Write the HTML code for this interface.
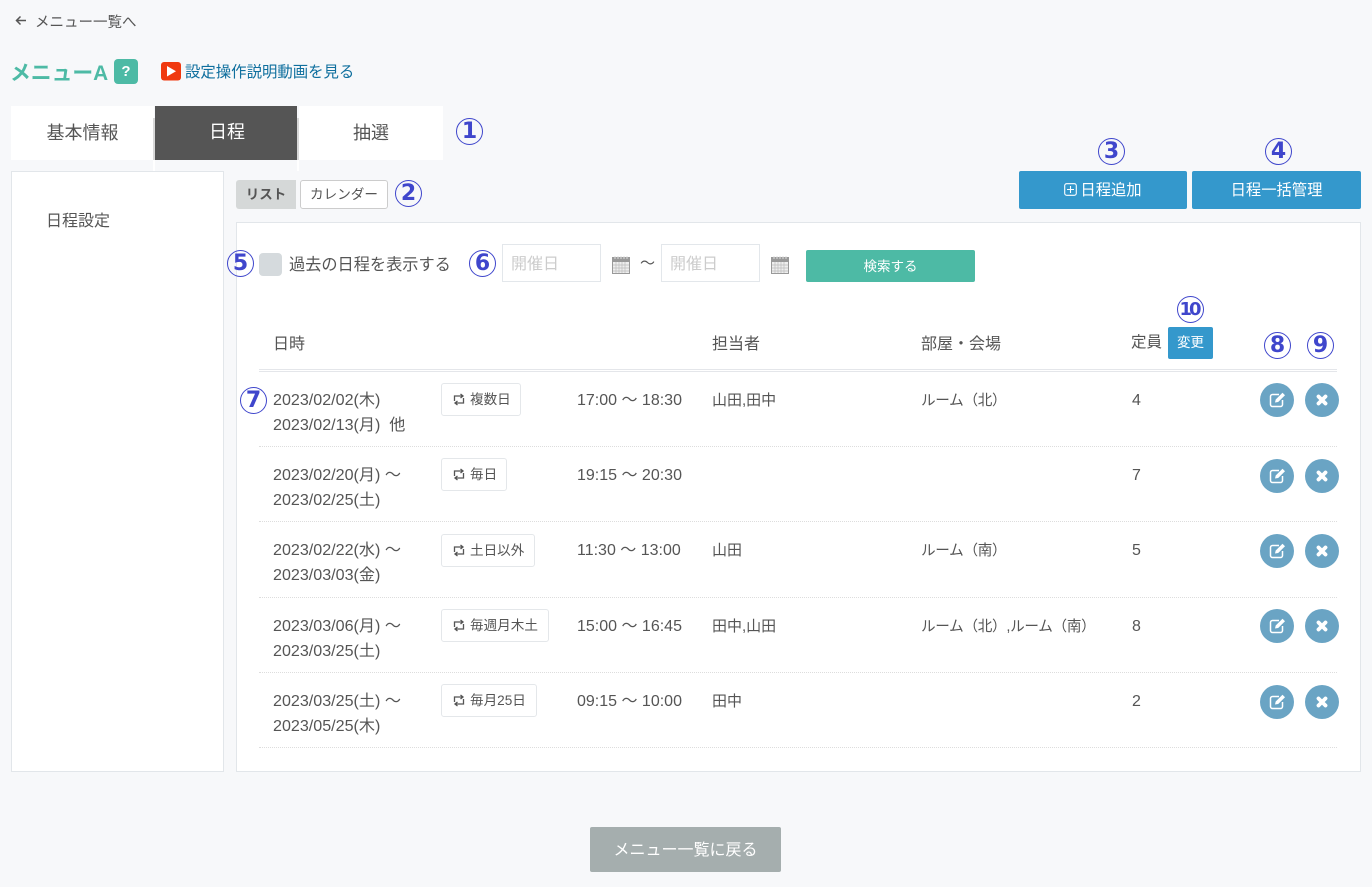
<!DOCTYPE html>
<html lang="ja"><head><meta charset="utf-8"><title>メニューA</title>
<style>
html,body{margin:0;padding:0}
body{width:1372px;height:887px;overflow:hidden;position:relative;background:#f7f8fa;font-family:"Liberation Sans","Noto Sans CJK JP",sans-serif;color:#555;font-size:15px}
.a,.c,.t,.rb,.ib{position:absolute}
.t{white-space:nowrap;line-height:20px}
.d{font-size:16.100px}
.h{font-size:16px}
.r{font-size:14.600px;letter-spacing:-.3px}
.n{font-size:15px}
.box{background:#fff;border:1px solid #e2e6ea;box-sizing:border-box;position:absolute}
.c{width:27px;height:27px;box-sizing:border-box;border:1px solid #3f46cc;border-radius:50%;color:#3f46cc;font-weight:bold;font-size:22px;line-height:26px;text-align:center;background:transparent;font-family:"DejaVu Sans",sans-serif}
.btn{position:absolute;background:#3498cc;color:#fff;border-radius:2px;text-align:center;font-size:15.300px;line-height:40px}
.tab{position:absolute;top:106px;height:54px;line-height:54px;text-align:center;font-size:18px;background:#fff}
.rb{height:33px;box-sizing:border-box;border:1px solid #e4e7ea;border-radius:3px;background:#fff;font-size:13.600px;line-height:31px;padding-left:10px;white-space:nowrap}
.rb svg{vertical-align:-2px;margin-right:4px}
.ib{width:34px;height:34px;border-radius:50%;background:#6aa4c4}
.ib svg{position:absolute;left:0;top:0}
.ln{position:absolute;left:259px;width:1078px;height:0;border-top:1px dotted #ddd}
.inp{position:absolute;top:244px;width:99px;height:38px;box-sizing:border-box;background:#fff;border:1px solid #e3e7eb;color:#ccc;font-size:16px;line-height:39px;padding-left:8px}
.cal{position:absolute;top:256px}
</style></head><body>

<svg class="a" style="left:14px;top:13px" width="14" height="14" viewBox="0 0 14 14"><path d="M12 7.500H2.500M6.500 3.500L2.500 7.500l4 4" fill="none" stroke="#555" stroke-width="1.500"/></svg>
<div class="t" style="left:35px;top:13px;font-size:14.500px">メニュー一覧へ</div>

<div class="t" style="left:10px;top:61px;font-size:20.800px;line-height:26px;color:#4dbaa5;font-weight:bold">メニューA</div>
<div class="a" style="left:114px;top:59px;width:24px;height:25px;border-radius:4px;background:#4dbaa5;color:#fff;font-weight:bold;font-size:15px;line-height:25px;text-align:center">?</div>
<svg class="a" style="left:161px;top:62px" width="20" height="19" viewBox="0 0 20 19"><rect width="20" height="18.500" rx="3" fill="#f0390f"/><path d="M6 4l9 5.200L6 14.500z" fill="#fff"/></svg>
<div class="t" style="left:185px;top:63px;font-size:15.400px;color:#0f6f9e">設定操作説明動画を見る</div>

<div class="tab" style="left:11px;width:143px">基本情報</div>
<div class="tab" style="left:155px;width:144px;background:transparent;">&nbsp;</div>
<div class="a" style="left:155px;top:106px;width:142px;height:54px;background:#555"></div>
<div class="t" style="left:209px;top:122px;font-size:18px;color:#fff">日程</div>
<div class="tab" style="left:299px;width:144px">抽選</div>
<div class="a" style="left:153px;top:118px;width:2px;height:42px;background:#d8d8d8"></div>
<div class="a" style="left:297px;top:118px;width:2px;height:42px;background:#d8d8d8"></div>
<div class="a" style="left:153px;top:160px;width:2px;height:11px;background:#fff"></div>
<div class="a" style="left:297px;top:160px;width:2px;height:11px;background:#fff"></div>
<div class="c" style="left:456px;top:118px">1</div>

<div class="box" style="left:11px;top:171px;width:213px;height:601px"></div>
<div class="t" style="left:46px;top:212px;font-size:16px">日程設定</div>

<div class="a" style="left:236px;top:180px;width:60px;height:29px;background:#d5d8d8;border-radius:3px 0 0 3px;text-align:center;font-weight:bold;font-size:13.500px;line-height:29px">リスト</div>
<div class="a" style="left:300px;top:180px;width:88px;height:29px;box-sizing:border-box;background:#fff;border:1px solid #ccc;border-radius:3px;text-align:center;font-size:13.600px;line-height:27px">カレンダー</div>
<div class="c" style="left:395px;top:180px">2</div>

<div class="c" style="left:1098px;top:138px">3</div>
<div class="c" style="left:1265px;top:138px">4</div>
<div class="btn" style="left:1019px;top:171px;width:168px;height:38px"><svg width="13" height="13" viewBox="0 0 13 13" style="vertical-align:-1px;margin-right:3px"><rect x=".7" y=".7" width="11.600" height="11.600" rx="2" fill="none" stroke="#fff" stroke-width="1.100"/><path d="M6.500 3v7M3 6.500h7" stroke="#fff" stroke-width="1.100"/></svg>日程追加</div>
<div class="btn" style="left:1192px;top:171px;width:169px;height:38px">日程一括管理</div>

<div class="box" style="left:236px;top:222px;width:1125px;height:550px"></div>

<div class="c" style="left:227px;top:250px">5</div>
<div class="a" style="left:259px;top:253px;width:23px;height:23px;border-radius:4px;background:#d5dadd"></div>
<div class="t" style="left:289px;top:255px;font-size:16.200px">過去の日程を表示する</div>
<div class="c" style="left:469px;top:250px">6</div>

<div class="inp" style="left:502px">開催日</div>
<svg class="cal" style="left:612px" width="18" height="18" viewBox="0 0 18 18"><rect y="1" width="18" height="17" fill="#999"/><rect x="1" y="6" width="16" height="11" fill="#eee"/><path d="M1 9h16M1 12h16M1 15h16M4 6v11M7 6v11M10 6v11M13 6v11" stroke="#bbb" stroke-width=".7"/><path d="M3 0v3M6 0v3M9 0v3M12 0v3M15 0v3" stroke="#ddd" stroke-width="1"/></svg>
<div class="t" style="left:640px;top:254px;font-size:15px">～</div>
<div class="inp" style="left:661px">開催日</div>
<svg class="cal" style="left:771px" width="18" height="18" viewBox="0 0 18 18"><rect y="1" width="18" height="17" fill="#999"/><rect x="1" y="6" width="16" height="11" fill="#eee"/><path d="M1 9h16M1 12h16M1 15h16M4 6v11M7 6v11M10 6v11M13 6v11" stroke="#bbb" stroke-width=".7"/><path d="M3 0v3M6 0v3M9 0v3M12 0v3M15 0v3" stroke="#ddd" stroke-width="1"/></svg>
<div class="a" style="left:806px;top:250px;width:169px;height:32px;background:#4dbaa5;border-radius:2px;color:#fff;text-align:center;font-size:13.500px;line-height:33px">検索する</div>

<div class="t h" style="left:273px;top:335px">日時</div>
<div class="t h" style="left:712px;top:335px">担当者</div>
<div class="t h" style="left:921px;top:335px">部屋・会場</div>
<div class="t" style="left:1131px;top:333px;font-size:15.500px">定員</div>
<div class="a" style="left:1168px;top:327px;width:45px;height:32px;background:#3498cc;border-radius:2px;color:#fff;text-align:center;font-size:13.500px;line-height:31px">変更</div>
<div class="c" style="left:1177px;top:296px;font-size:18px;letter-spacing:-3px;text-indent:-3px">10</div>
<div class="c" style="left:1264px;top:332px">8</div>
<div class="c" style="left:1307px;top:332px">9</div>
<div class="a" style="left:259px;top:369px;width:1078px;height:3px;box-sizing:border-box;border-top:1px solid #e4e6ea;border-bottom:1px solid #e4e6ea"></div>

<div class="c" style="left:240px;top:387px">7</div>

<!-- row 1 -->
<div class="t d" style="left:273px;top:390px">2023/02/02(木)</div>
<div class="t d" style="left:273px;top:415px">2023/02/13(月)&nbsp;&nbsp;他</div>
<div class="rb" style="left:441px;top:383px;width:80px"><svg width="14" height="13" viewBox="0 0 14 13"><path d="M2.500 8V3h8M8.500 1l2.500 2-2.500 2M11.500 5v5h-8M5.500 12L3 10l2.500-2" fill="none" stroke="#555" stroke-width="1.300"/></svg>複数日</div>
<div class="t h" style="left:577px;top:391px">17:00 ～ 18:30</div>
<div class="t n" style="left:712px;top:391px">山田,田中</div>
<div class="t r" style="left:921px;top:391px">ルーム（北）</div>
<div class="t h" style="left:1132px;top:391px">4</div>
<div class="ln" style="top:446px"></div>

<!-- row 2 -->
<div class="t d" style="left:273px;top:465px">2023/02/20(月) ～</div>
<div class="t d" style="left:273px;top:490px">2023/02/25(土)</div>
<div class="rb" style="left:441px;top:458px;width:66px"><svg width="14" height="13" viewBox="0 0 14 13"><path d="M2.500 8V3h8M8.500 1l2.500 2-2.500 2M11.500 5v5h-8M5.500 12L3 10l2.500-2" fill="none" stroke="#555" stroke-width="1.300"/></svg>毎日</div>
<div class="t h" style="left:577px;top:466px">19:15 ～ 20:30</div>
<div class="t h" style="left:1132px;top:466px">7</div>
<div class="ln" style="top:521px"></div>

<!-- row 3 -->
<div class="t d" style="left:273px;top:540px">2023/02/22(水) ～</div>
<div class="t d" style="left:273px;top:565px">2023/03/03(金)</div>
<div class="rb" style="left:441px;top:534px;width:94px"><svg width="14" height="13" viewBox="0 0 14 13"><path d="M2.500 8V3h8M8.500 1l2.500 2-2.500 2M11.500 5v5h-8M5.500 12L3 10l2.500-2" fill="none" stroke="#555" stroke-width="1.300"/></svg>土日以外</div>
<div class="t h" style="left:577px;top:541px">11:30 ～ 13:00</div>
<div class="t n" style="left:712px;top:541px">山田</div>
<div class="t r" style="left:921px;top:541px">ルーム（南）</div>
<div class="t h" style="left:1132px;top:541px">5</div>
<div class="ln" style="top:597px"></div>

<!-- row 4 -->
<div class="t d" style="left:273px;top:616px">2023/03/06(月) ～</div>
<div class="t d" style="left:273px;top:641px">2023/03/25(土)</div>
<div class="rb" style="left:441px;top:609px;width:108px"><svg width="14" height="13" viewBox="0 0 14 13"><path d="M2.500 8V3h8M8.500 1l2.500 2-2.500 2M11.500 5v5h-8M5.500 12L3 10l2.500-2" fill="none" stroke="#555" stroke-width="1.300"/></svg>毎週月木土</div>
<div class="t h" style="left:577px;top:617px">15:00 ～ 16:45</div>
<div class="t n" style="left:712px;top:617px">田中,山田</div>
<div class="t r" style="left:921px;top:617px">ルーム（北）,ルーム（南）</div>
<div class="t h" style="left:1132px;top:617px">8</div>
<div class="ln" style="top:672px"></div>

<!-- row 5 -->
<div class="t d" style="left:273px;top:691px">2023/03/25(土) ～</div>
<div class="t d" style="left:273px;top:716px">2023/05/25(木)</div>
<div class="rb" style="left:441px;top:684px;width:96px"><svg width="14" height="13" viewBox="0 0 14 13"><path d="M2.500 8V3h8M8.500 1l2.500 2-2.500 2M11.500 5v5h-8M5.500 12L3 10l2.500-2" fill="none" stroke="#555" stroke-width="1.300"/></svg>毎月25日</div>
<div class="t h" style="left:577px;top:692px">09:15 ～ 10:00</div>
<div class="t n" style="left:712px;top:692px">田中</div>
<div class="t h" style="left:1132px;top:692px">2</div>
<div class="ln" style="top:747px"></div>

<!-- action buttons -->
<div class="ib" style="left:1260px;top:383px"><svg width="34" height="34" viewBox="0 0 34 34"><path d="M19 11.500h-6.500a2 2 0 0 0-2 2v8a2 2 0 0 0 2 2h8a2 2 0 0 0 2-2V17" fill="none" stroke="#fff" stroke-width="1.500"/><path d="M15 19.500l.7-3L22.500 9.700l2.500 2.500-6.800 6.800z" fill="#fff"/></svg></div>
<div class="ib" style="left:1305px;top:383px"><svg width="34" height="34" viewBox="0 0 34 34"><path d="M13.500 13.500l7 7M20.500 13.500l-7 7" stroke="#fff" stroke-width="3.800" stroke-linecap="round"/></svg></div>
<div class="ib" style="left:1260px;top:459px"><svg width="34" height="34" viewBox="0 0 34 34"><path d="M19 11.500h-6.500a2 2 0 0 0-2 2v8a2 2 0 0 0 2 2h8a2 2 0 0 0 2-2V17" fill="none" stroke="#fff" stroke-width="1.500"/><path d="M15 19.500l.7-3L22.500 9.700l2.500 2.500-6.800 6.800z" fill="#fff"/></svg></div>
<div class="ib" style="left:1305px;top:459px"><svg width="34" height="34" viewBox="0 0 34 34"><path d="M13.500 13.500l7 7M20.500 13.500l-7 7" stroke="#fff" stroke-width="3.800" stroke-linecap="round"/></svg></div>
<div class="ib" style="left:1260px;top:534px"><svg width="34" height="34" viewBox="0 0 34 34"><path d="M19 11.500h-6.500a2 2 0 0 0-2 2v8a2 2 0 0 0 2 2h8a2 2 0 0 0 2-2V17" fill="none" stroke="#fff" stroke-width="1.500"/><path d="M15 19.500l.7-3L22.500 9.700l2.500 2.500-6.800 6.800z" fill="#fff"/></svg></div>
<div class="ib" style="left:1305px;top:534px"><svg width="34" height="34" viewBox="0 0 34 34"><path d="M13.500 13.500l7 7M20.500 13.500l-7 7" stroke="#fff" stroke-width="3.800" stroke-linecap="round"/></svg></div>
<div class="ib" style="left:1260px;top:609px"><svg width="34" height="34" viewBox="0 0 34 34"><path d="M19 11.500h-6.500a2 2 0 0 0-2 2v8a2 2 0 0 0 2 2h8a2 2 0 0 0 2-2V17" fill="none" stroke="#fff" stroke-width="1.500"/><path d="M15 19.500l.7-3L22.500 9.700l2.500 2.500-6.800 6.800z" fill="#fff"/></svg></div>
<div class="ib" style="left:1305px;top:609px"><svg width="34" height="34" viewBox="0 0 34 34"><path d="M13.500 13.500l7 7M20.500 13.500l-7 7" stroke="#fff" stroke-width="3.800" stroke-linecap="round"/></svg></div>
<div class="ib" style="left:1260px;top:685px"><svg width="34" height="34" viewBox="0 0 34 34"><path d="M19 11.500h-6.500a2 2 0 0 0-2 2v8a2 2 0 0 0 2 2h8a2 2 0 0 0 2-2V17" fill="none" stroke="#fff" stroke-width="1.500"/><path d="M15 19.500l.7-3L22.500 9.700l2.500 2.500-6.800 6.800z" fill="#fff"/></svg></div>
<div class="ib" style="left:1305px;top:685px"><svg width="34" height="34" viewBox="0 0 34 34"><path d="M13.500 13.500l7 7M20.500 13.500l-7 7" stroke="#fff" stroke-width="3.800" stroke-linecap="round"/></svg></div>

<div class="a" style="left:590px;top:827px;width:191px;height:45px;background:#a5aeae;border-radius:2px;color:#fff;text-align:center;font-size:16px;line-height:47px">メニュー一覧に戻る</div>
</body></html>
